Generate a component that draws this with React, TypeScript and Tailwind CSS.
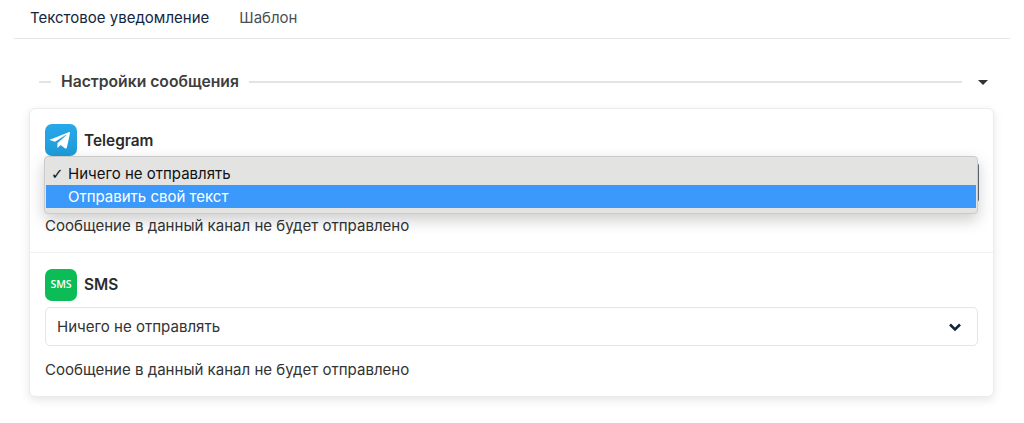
const font = { fontFamily: 'Inter, "Liberation Sans", sans-serif' };

function TelegramIcon() {
  return (
    <svg width="32" height="32" viewBox="0 0 32 32" className="shrink-0">
      <defs>
        <linearGradient id="tg" x1="0" y1="0" x2="0" y2="1">
          <stop offset="0" stopColor="#28a8ea" />
          <stop offset="1" stopColor="#1f9bd8" />
        </linearGradient>
      </defs>
      <rect width="32" height="32" rx="7" fill="url(#tg)" />
      <path d="M5.5 15.4 23.6 8.2c.9-.3 1.6.2 1.3 1.5l-3 13.9c-.2 1-.9 1.2-1.7.8l-4.6-3.4-2.3 2.2c-.3.3-.5.5-1 .5l.3-4.7 8.6-7.8c.4-.3-.1-.5-.6-.2l-10.6 6.7-4.5-1.4c-1-.3-1-1 .2-1.4z" fill="#fff" />
    </svg>
  );
}

function SmsIcon() {
  return (
    <div
      style={{ fontFamily: '"Open Sans", sans-serif' }}
      className="flex h-8 w-8 shrink-0 items-center justify-center rounded-[7px] bg-[#0cbc56] text-[10.5px] font-semibold text-white"
    >
      SMS
    </div>
  );
}

function Chevron() {
  return (
    <svg width="14" height="10" viewBox="0 0 14 10" fill="none">
      <path d="M2 2.5 7 7.5 12 2.5" stroke="#12263f" strokeWidth="2.6" />
    </svg>
  );
}

function Select() {
  return (
    <div className="flex h-[39px] items-center justify-between rounded-[5px] border border-[#e3e5e8] bg-white pl-[11px] pr-[15px] text-[15.05px] text-[#333]">
      <span className="pt-[2px]">Ничего не отправлять</span>
      <Chevron />
    </div>
  );
}

function Channel({ icon, name, open, last }: { icon: React.ReactNode; name: string; open?: boolean; last?: boolean }) {
  return (
    <div className={last ? "relative px-[15px] pb-[15px] pt-4" : "relative border-b border-[#eff0f2] px-[15px] pb-[15px] pt-[15px]"}>
      <div className="flex h-8 items-center gap-[7px]">
        {icon}
        <span className={open ? "pt-[2px] text-[15.4px] font-semibold text-[#2b2b2b]" : "text-[15.4px] font-semibold text-[#2b2b2b]"}>{name}</span>
      </div>
      <div className="relative mt-[6.5px]">
        <Select />
        {open && <div className="absolute -right-px top-0 h-[39px] w-[3px] rounded-r-[3px] bg-[#5f6b78]" />}
      </div>
      <p className="mt-[13px] h-[22px] text-[15.05px] leading-[22px] text-[#333]">Сообщение в данный канал не будет отправлено</p>
      {open && (
        <div className="absolute left-[14px] right-[15px] top-[47px] z-10 h-[58px] rounded-[4px] border border-[#cbcbcb] bg-[#e3e3e2] px-px pt-[5px] text-[15px] shadow-[0_6px_16px_rgba(0,0,0,0.2)]">
          <div className="flex h-[23px] items-center pl-[5px] pt-[2px] text-[#111]">
            <span className="w-[17px] text-[15px]" style={{ fontFamily: '"DejaVu Sans", sans-serif' }}>✓</span>
            <span>Ничего не отправлять</span>
          </div>
          <div className="flex h-[23px] items-center bg-[#3b99fc] pl-[22px] pt-[2px] text-white">Отправить свой текст</div>
        </div>
      )}
    </div>
  );
}

export default function App() {
  return (
    <div style={font} className="h-[423px] w-[1024px] overflow-hidden bg-white">
      <div className="mx-[14px] flex h-[39px] items-center gap-[30px] border-b border-[#e4e6e9] pb-[2px] pl-4 text-[15px]">
        <span className="text-[#12263f]">Текстовое уведомление</span>
        <span className="text-[#4a4f55]">Шаблон</span>
      </div>
      <div className="mx-[29px] mt-[34px] flex h-[18px] items-center pl-[10px] pr-[7px]">
        <div className="h-0.5 w-[12px] bg-[#e3e3e3]" />
        <span className="mx-[10px] text-[15.7px] font-semibold text-[#3d3d3d]">Настройки сообщения</span>
        <div className="h-0.5 flex-1 bg-[#e3e3e3]" />
        <div className="ml-[16px] h-0 w-0 border-x-[5px] border-t-[5px] border-x-transparent border-t-[#333]" />
      </div>
      <div className="ml-[29px] mr-[30px] mt-[17px] rounded-[6px] border border-[#ebecee] bg-white shadow-[0_3px_10px_rgba(0,0,0,0.1)]">
        <Channel icon={<TelegramIcon />} name="Telegram" open />
        <Channel icon={<SmsIcon />} name="SMS" last />
      </div>
    </div>
  );
}
